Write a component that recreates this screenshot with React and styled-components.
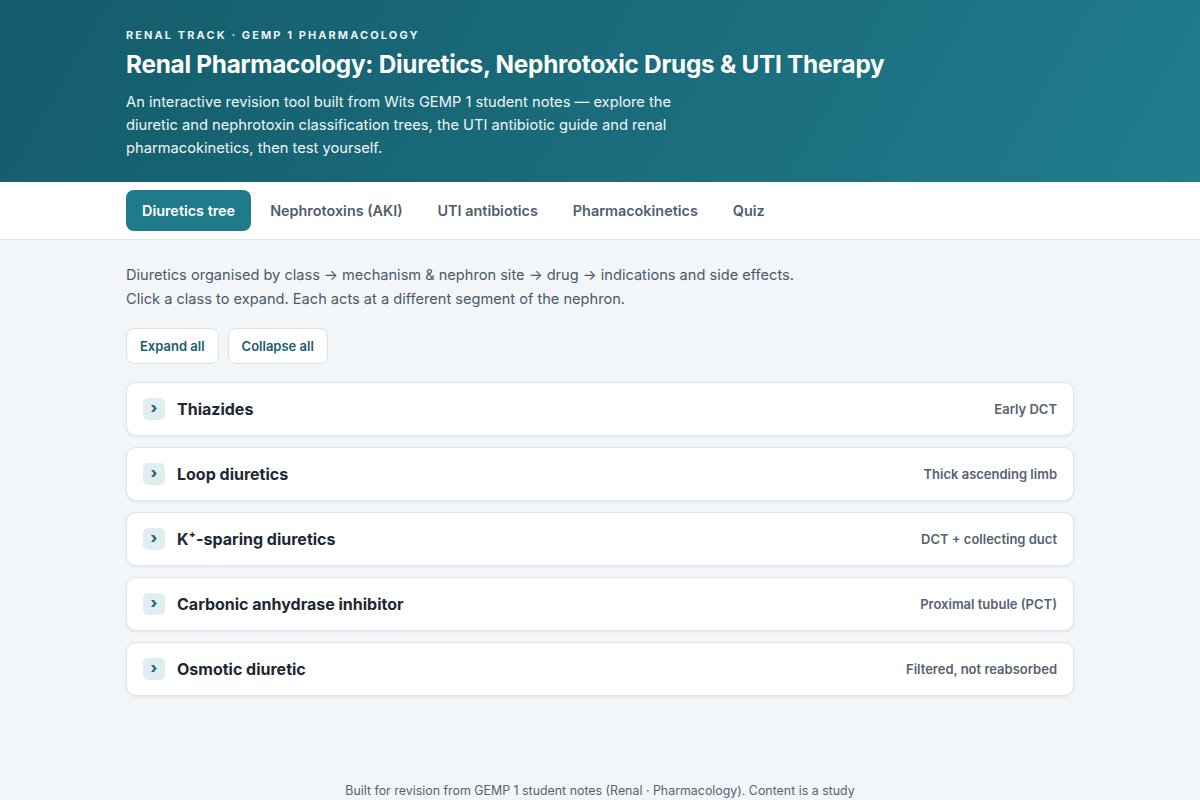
import React, { useState } from "react";
import styled, { createGlobalStyle } from "styled-components";

const GlobalStyle = createGlobalStyle`
  * { box-sizing: border-box; }
  html, body { margin: 0; padding: 0; }
  body {
    background: #f2f6f9;
    font-family: Inter, "Noto Sans", sans-serif;
    color: #1c2833;
    -webkit-font-smoothing: antialiased;
  }
`;

const Hero = styled.header`
  background: linear-gradient(120deg, #145c6b 0%, #1a6b7b 50%, #217c8c 100%);
  color: #fff;
  padding: 28px 0 22px;
`;

const Container = styled.div`
  width: 980px;
  margin: 0 auto;
  padding: 0 16px;
`;

const Eyebrow = styled.div`
  font-size: 11px;
  font-weight: 700;
  letter-spacing: 0.19em;
  text-transform: uppercase;
  opacity: 0.92;
`;

const Title = styled.h1`
  margin: 7px 0 10px;
  font-size: 24.3px;
  font-weight: 700;
  letter-spacing: -0.01em;
  line-height: 1.3;
`;

const Lead = styled.p`
  margin: 0;
  max-width: 590px;
  font-size: 14.7px;
  line-height: 23px;
  color: #eef6f7;
`;

const NavBar = styled.nav`
  background: #fff;
  border-bottom: 1px solid #dfe5ea;
  padding: 8px 0;
`;

const Tabs = styled.div`
  display: flex;
  gap: 3px;
`;

const Tab = styled.button`
  border: 0;
  border-radius: 8px;
  padding: 0 16px;
  height: 41px;
  font-family: inherit;
  font-size: 14.4px;
  font-weight: 600;
  cursor: pointer;
  background: ${(p) => (p.$active ? "#1f7a89" : "transparent")};
  color: ${(p) => (p.$active ? "#fff" : "#505e6b")};
`;

const Main = styled.main`
  padding: 23px 0 87px;
`;

const Intro = styled.p`
  margin: 0 0 17px;
  font-size: 14.6px;
  line-height: 24px;
  color: #4b5a67;
`;

const Actions = styled.div`
  display: flex;
  gap: 9px;
  margin-bottom: 18px;
`;

const ActionButton = styled.button`
  height: 36px;
  padding: 0 13px;
  background: #fff;
  border: 1px solid #dbe2e7;
  border-radius: 8px;
  font-family: inherit;
  font-size: 13px;
  font-weight: 600;
  color: #175f6d;
  cursor: pointer;
`;

const List = styled.div`
  display: flex;
  flex-direction: column;
  gap: 11px;
`;

const Card = styled.div`
  background: #fff;
  border: 1px solid #dfe5ea;
  border-radius: 10px;
  box-shadow: 0 1px 3px rgba(20, 40, 60, 0.08);
`;

const CardHead = styled.button`
  width: 100%;
  display: flex;
  align-items: center;
  gap: 12px;
  height: 52px;
  padding: 0 16px;
  background: transparent;
  border: 0;
  font-family: inherit;
  cursor: pointer;
  text-align: left;
`;

const Chevron = styled.span`
  flex: none;
  width: 22px;
  height: 22px;
  border-radius: 5px;
  background: #e1eef1;
  color: #1b6371;
  display: flex;
  align-items: center;
  justify-content: center;
  font-size: 15px;
  font-weight: 800;
  line-height: 1;
  padding-bottom: 2px;
  transform: rotate(${(p) => (p.$open ? 90 : 0)}deg);
`;

const ClassName = styled.span`
  flex: 1;
  font-size: 16px;
  font-weight: 700;
  color: #1c2833;
`;

const Site = styled.span`
  font-size: 13px;
  font-weight: 600;
  color: #56636f;
`;

const Body = styled.div`
  padding: 0 16px 16px 50px;
  font-size: 14px;
  color: #4b5a67;
`;

const Footer = styled.footer`
  text-align: center;
  font-size: 12.4px;
  color: #56636f;
  padding: 0 0 16px;
`;

const classes = [
  { name: "Thiazides", site: "Early DCT" },
  { name: "Loop diuretics", site: "Thick ascending limb" },
  { name: "K⁺-sparing diuretics", site: "DCT + collecting duct" },
  { name: "Carbonic anhydrase inhibitor", site: "Proximal tubule (PCT)" },
  { name: "Osmotic diuretic", site: "Filtered, not reabsorbed" },
];

const tabs = ["Diuretics tree", "Nephrotoxins (AKI)", "UTI antibiotics", "Pharmacokinetics", "Quiz"];

export default function App() {
  const [active, setActive] = useState(0);
  const [open, setOpen] = useState({});

  const toggle = (i) => setOpen((o) => ({ ...o, [i]: !o[i] }));
  const setAll = (v) => {
    const next = {};
    classes.forEach((_, i) => (next[i] = v));
    setOpen(next);
  };

  return (
    <>
      <GlobalStyle />
      <Hero>
        <Container>
          <Eyebrow>Renal track · GEMP 1 Pharmacology</Eyebrow>
          <Title>Renal Pharmacology: Diuretics, Nephrotoxic Drugs &amp; UTI Therapy</Title>
          <Lead>
            An interactive revision tool built from Wits GEMP 1 student notes — explore the diuretic and
            nephrotoxin classification trees, the UTI antibiotic guide and renal pharmacokinetics, then test
            yourself.
          </Lead>
        </Container>
      </Hero>
      <NavBar>
        <Container>
          <Tabs>
            {tabs.map((t, i) => (
              <Tab key={t} $active={i === active} onClick={() => setActive(i)}>
                {t}
              </Tab>
            ))}
          </Tabs>
        </Container>
      </NavBar>
      <Main>
        <Container>
          <Intro>
            Diuretics organised by class → mechanism &amp; nephron site → drug → indications and side effects.
            <br />
            Click a class to expand. Each acts at a different segment of the nephron.
          </Intro>
          <Actions>
            <ActionButton onClick={() => setAll(true)}>Expand all</ActionButton>
            <ActionButton onClick={() => setAll(false)}>Collapse all</ActionButton>
          </Actions>
          <List>
            {classes.map((c, i) => (
              <Card key={c.name}>
                <CardHead onClick={() => toggle(i)}>
                  <Chevron $open={!!open[i]}>›</Chevron>
                  <ClassName>{c.name}</ClassName>
                  <Site>{c.site}</Site>
                </CardHead>
                {open[i] && <Body>Mechanism, drugs, indications and side effects.</Body>}
              </Card>
            ))}
          </List>
        </Container>
      </Main>
      <Footer>
        Built for revision from GEMP 1 student notes (Renal · Pharmacology). Content is a study
      </Footer>
    </>
  );
}
